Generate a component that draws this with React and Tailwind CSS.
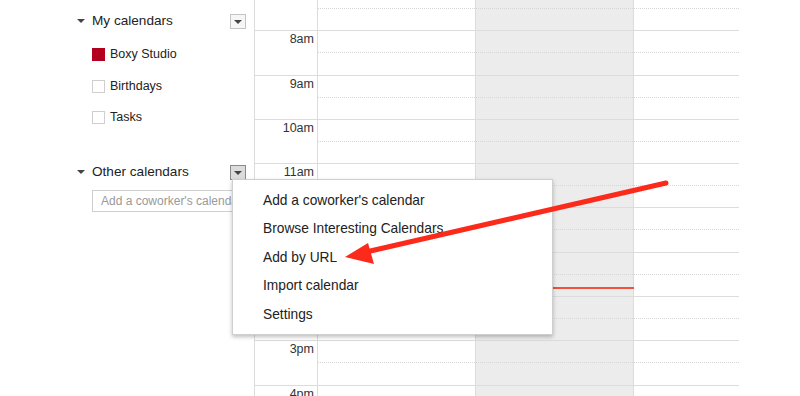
import React from 'react';

const hours = ['', '8am', '9am', '10am', '11am', '12pm', '1pm', '2pm', '3pm', '4pm'];

const Caret = ({ className = '' }) => (
  <span className={`inline-block w-0 h-0 border-l-[4px] border-r-[4px] border-t-[4px] border-l-transparent border-r-transparent ${className}`} />
);

const MenuButton = ({ pressed }) => (
  <div
    className={`w-[16px] h-[15px] flex items-center justify-center border pt-[1px] ${
      pressed ? 'border-[#8a8a8a] bg-[#dcdcdc]' : 'border-[#c4c4c4] bg-[#f6f6f6]'
    }`}
  >
    <Caret className="border-t-[#444]" />
  </div>
);

const Sidebar = () => (
  <aside className="w-[254px] shrink-0 pl-[77px] pr-[8px] text-[#222]">
    <div className="h-[41px] flex items-center justify-between pt-[1px]">
      <div className="flex items-center">
        <Caret className="border-t-[#444] mr-[7px]" />
        <span className="text-[13.6px]">My calendars</span>
      </div>
      <MenuButton />
    </div>
    <div className="pl-[15px] text-[12.5px]">
      <div className="h-[26px] flex items-center">
        <span className="w-[13px] h-[13px] bg-[#b3001e] mr-[5px]" />
        Boxy Studio
      </div>
      <div className="h-[32px] flex items-center mt-[3px]">
        <span className="w-[13px] h-[13px] border border-[#cfcfcf] bg-white mr-[5px]" />
        Birthdays
      </div>
      <div className="h-[30px] flex items-center">
        <span className="w-[13px] h-[13px] border border-[#cfcfcf] bg-white mr-[5px]" />
        Tasks
      </div>
    </div>
    <div className="h-[34px] mt-[23px] flex items-center justify-between">
      <div className="flex items-center">
        <Caret className="border-t-[#444] mr-[7px]" />
        <span className="text-[13.6px]">Other calendars</span>
      </div>
      <MenuButton pressed />
    </div>
    <div className="pl-[15px] mt-[1px]">
      <div className="w-[170px] h-[22px] border border-[#cfcfcf] flex items-center pl-[8px] text-[12px] text-[#999] whitespace-nowrap overflow-hidden">
        Add a coworker's calendar
      </div>
    </div>
  </aside>
);

const DayCell = ({ gray }) => (
  <div className={`w-[158px] shrink-0 border-r border-[#dcdcdc] ${gray ? 'bg-[#ececec]' : ''}`}>
    <div className="h-[22px] border-b border-dotted border-[#d6d6d6]" />
  </div>
);

const Grid = () => (
  <div className="flex-1 overflow-hidden">
    <div className="-mt-[14px] w-[485px] relative">
      {hours.map((h, i) => (
        <div key={i} className="h-[44.3px] flex border-t border-[#dcdcdc]">
          <div className="w-[64px] shrink-0 border-l border-r border-[#dcdcdc] text-right pr-[3px] leading-[16px] text-[12.5px] text-[#333]">
            {h}
          </div>
          <DayCell />
          <DayCell gray />
          <div className="w-[105px] shrink-0">
            <div className="h-[22px] border-b border-dotted border-[#d6d6d6]" />
          </div>
        </div>
      ))}
      <div className="absolute left-[222px] top-[301px] w-[158px] h-[2px] bg-[#f0503c]" />
    </div>
  </div>
);

const Menu = () => (
  <div className="absolute left-[232px] top-[179px] w-[321px] h-[156px] bg-white border border-[#cfcfcf] shadow-[0_2px_4px_rgba(0,0,0,0.25)] pt-[7px] text-[13.75px] text-[#222]">
    {["Add a coworker's calendar", 'Browse Interesting Calendars', 'Add by URL', 'Import calendar', 'Settings'].map((t) => (
      <div key={t} className="h-[28.5px] flex items-center pl-[30px]">
        {t}
      </div>
    ))}
  </div>
);

const Arrow = () => (
  <svg className="absolute inset-0 pointer-events-none" width="800" height="396">
    <line x1="666" y1="183" x2="366" y2="252" stroke="#fb2a1b" strokeWidth="5" strokeLinecap="round" />
    <polygon points="345,257 368,243 374,264" fill="#fb2a1b" />
  </svg>
);

export default function App() {
  return (
    <div className="relative w-[800px] h-[396px] overflow-hidden bg-white flex" style={{ fontFamily: '"Liberation Sans", Arial, sans-serif' }}>
      <Sidebar />
      <Grid />
      <Menu />
      <Arrow />
    </div>
  );
}
